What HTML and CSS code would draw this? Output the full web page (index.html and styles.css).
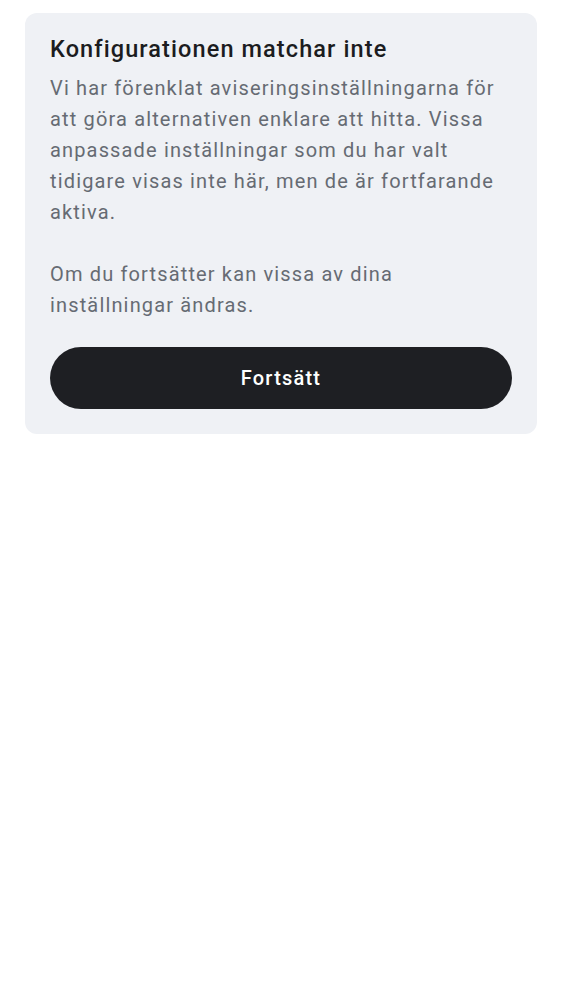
FILE: index.html
```html
<!DOCTYPE html>
<html lang="sv">
<head>
<meta charset="utf-8">
<link rel="stylesheet" href="styles.css">
</head>
<body>
<div class="page">
  <div class="card">
    <h1 class="title">Konfigurationen matchar inte</h1>
    <p class="body">Vi har förenklat aviseringsinställningarna för att göra alternativen enklare att hitta. Vissa anpassade inställningar som du har valt tidigare visas inte här, men de är fortfarande aktiva.</p>
    <p class="body second">Om du fortsätter kan vissa av dina inställningar ändras.</p>
    <button class="btn">Fortsätt</button>
  </div>
</div>
</body>
</html>
```

FILE: styles.css
```css
html, body {
  margin: 0;
  padding: 0;
  background: #ffffff;
}
.page {
  padding: 13px 25px;
  font-family: Roboto, "Noto Sans", sans-serif;
}
.card {
  background: #eff1f5;
  border-radius: 12px;
  padding: 21px 25px 25px;
  display: flex;
  flex-direction: column;
}
.title {
  margin: 0 0 9px;
  font-size: 23.5px;
  font-weight: 500;
  line-height: 30px;
  letter-spacing: 1.1px;
  color: #1b1c20;
}
.body {
  margin: 0;
  font-size: 20px;
  line-height: 31px;
  letter-spacing: 1.15px;
  color: #666b73;
}
.body.second {
  margin-top: 31px;
}
.btn {
  margin-top: 26px;
  height: 62px;
  border: none;
  border-radius: 31px;
  background: #1e1f23;
  color: #ffffff;
  font-family: Roboto, "Noto Sans", sans-serif;
  font-size: 20px;
  font-weight: 500;
  letter-spacing: 1.2px;
  cursor: pointer;
}
```
